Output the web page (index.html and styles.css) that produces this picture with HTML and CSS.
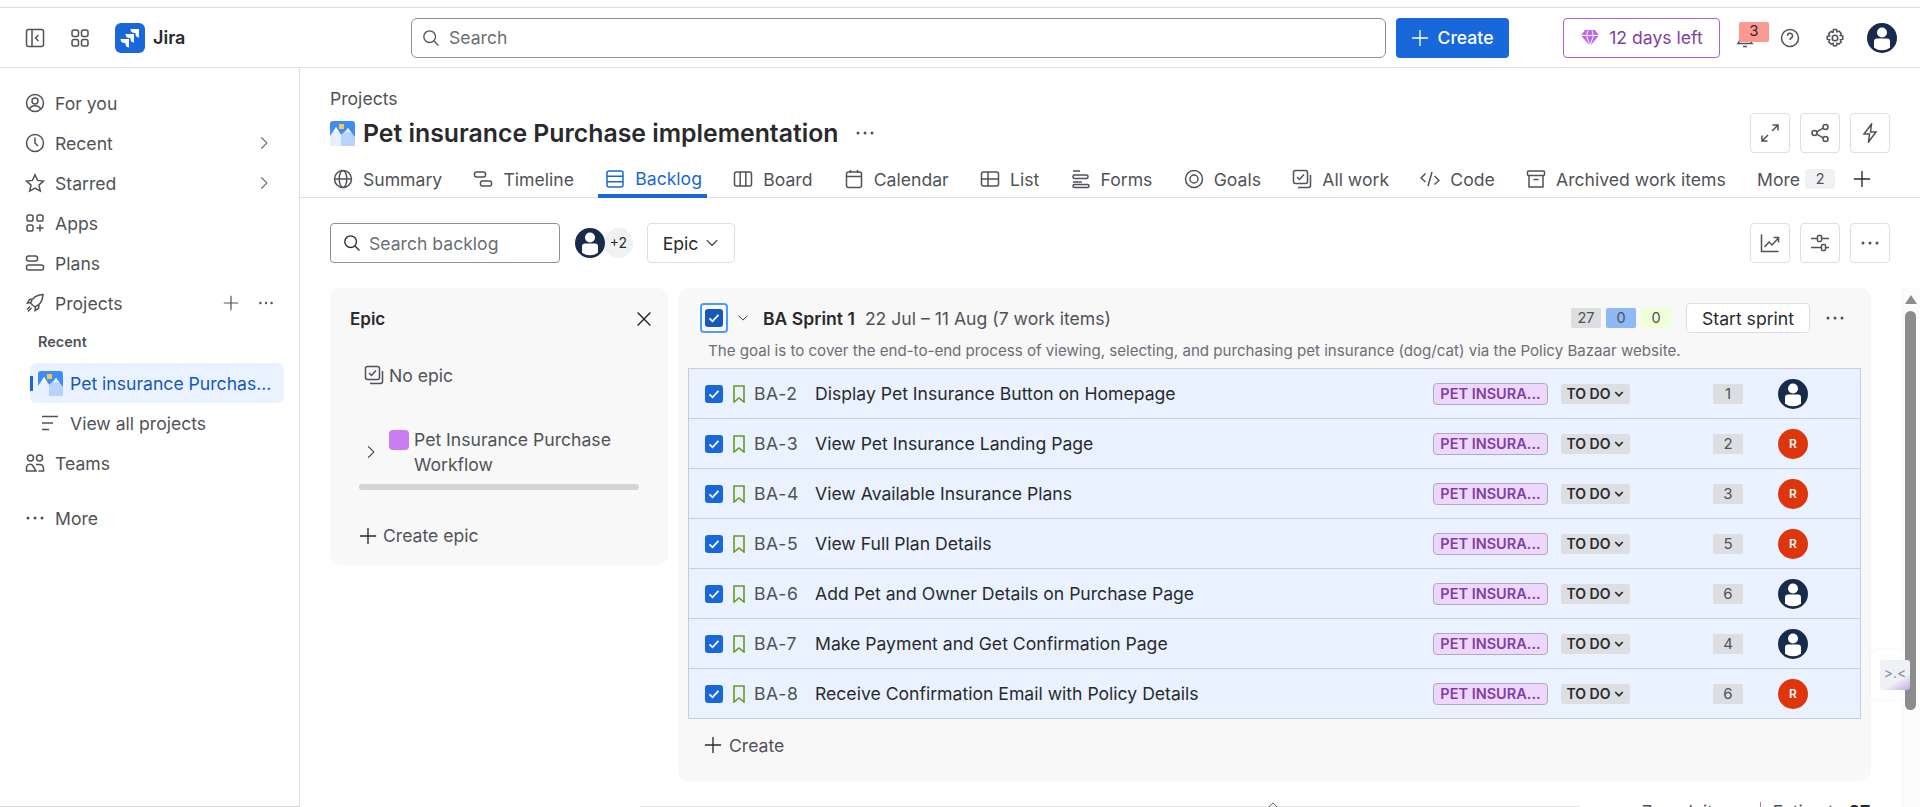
FILE: index.html
```html
<!DOCTYPE html>
<html lang="en">
<head>
    <meta charset="UTF-8">
    <title>Backlog - Jira</title>
    <link rel="stylesheet" href="styles.css">
</head>
<body>
    <svg class="defs" width="0" height="0">
        <symbol id="i-panel" viewBox="0 0 20 20"><rect x="1.500" y="1.500" width="17" height="17" rx="2"/><path d="M7 1.500v17M13.500 7l-3 3 3 3"/></symbol>
        <symbol id="i-grid" viewBox="0 0 20 20"><rect x="2" y="2" width="6.500" height="6.500" rx="2"/><rect x="11.500" y="2" width="6.500" height="6.500" rx="2"/><rect x="2" y="11.500" width="6.500" height="6.500" rx="2"/><rect x="11.500" y="11.500" width="6.500" height="6.500" rx="2"/></symbol>
        <symbol id="i-search" viewBox="0 0 20 20"><circle cx="8.500" cy="8.500" r="6.500"/><path d="M13.300 13.300l5 5"/></symbol>
        <symbol id="i-plus" viewBox="0 0 20 20"><path d="M10 1v18M1 10h18"/></symbol>
        <symbol id="i-gem" viewBox="0 0 20 20"><path class="gem-solid" d="M5 2h10l4 5.500L10 18 1 7.500z"/><path class="gem-cut" d="M1 7.500h18M6.500 7.500L10 18l3.500-10.500M6.500 7.500L8 2.500M13.500 7.500L12 2.500"/></symbol>
        <symbol id="i-bell" viewBox="0 0 20 20"><path d="M3 15.500c1.500-1.500 2-3 2-6.500a5 5 0 0 1 10 0c0 3.500.5 5 2 6.500zM8 18.500h4"/></symbol>
        <symbol id="i-help" viewBox="0 0 20 20"><circle cx="10" cy="10" r="8.500"/><path d="M7.500 7.800a2.500 2.500 0 1 1 3.700 2.200c-.8.500-1.200 1-1.200 2M10 14.200v.4"/></symbol>
        <symbol id="i-gear" viewBox="0 0 20 20"><circle cx="10" cy="10" r="2.800"/><path d="M8.500 1.500h3l.5 2.500 2-.9 2.300 2.200-1 2.100 2.500.6v3.200l-2.500.6 1 2.100-2.300 2.200-2-.9-.5 2.500h-3l-.5-2.500-2 .9-2.300-2.200 1-2.100-2.500-.6V8.400l2.500-.6-1-2.100L6 3.500l2 .9z"/></symbol>
        <symbol id="i-avatar" viewBox="0 0 30 30"><circle class="av-bg" cx="15" cy="15" r="15"/><circle class="av-fg" cx="15" cy="9.500" r="5"/><path class="av-fg" d="M10 15.500h10a3 3 0 0 1 3 3v6.200a14 14 0 0 1-16 0v-6.200a3 3 0 0 1 3-3z"/></symbol>
        <symbol id="i-foryou" viewBox="0 0 20 20"><circle cx="10" cy="10" r="8.500"/><circle cx="10" cy="8" r="3"/><path d="M4.500 16c1-2.500 3-3.200 5.500-3.200s4.500.7 5.500 3.200"/></symbol>
        <symbol id="i-clock" viewBox="0 0 20 20"><circle cx="10" cy="10" r="8.500"/><path d="M10 4.500V10l3 3"/></symbol>
        <symbol id="i-star" viewBox="0 0 20 20"><path d="M10 1.800l2.500 5.600 6 .6-4.500 4.100 1.300 6L10 15l-5.300 3.100 1.300-6L1.500 8l6-.6z"/></symbol>
        <symbol id="i-apps" viewBox="0 0 20 20"><rect x="2" y="2" width="6" height="6" rx="1.800"/><rect x="12" y="2" width="6" height="6" rx="1.800"/><rect x="2" y="12" width="6" height="6" rx="1.800"/><path d="M15 11.500v7M11.500 15h7"/></symbol>
        <symbol id="i-timeline" viewBox="0 0 20 20"><rect x="1.500" y="3" width="11" height="5" rx="2"/><rect x="7.500" y="12" width="11" height="5" rx="2"/></symbol>
        <symbol id="i-plans" viewBox="0 0 20 20"><rect x="1.500" y="3" width="11" height="5" rx="2"/><rect x="1.500" y="12" width="17" height="5" rx="2"/></symbol>
        <symbol id="i-rocket" viewBox="0 0 20 20"><path d="M8 12.500L5.500 10C7 5.500 11 2 18 1.500c-.2 6.500-3.500 10.500-8 12.500zM6 9.500l-3.500.5 2-3.500 3.500-.5M10.500 14l-.5 3.500 3.500-2 .5-3.500M5 13.500l-3 3M6.500 15l-3.500 3.500"/></symbol>
        <symbol id="i-dots" viewBox="0 0 20 20"><circle class="dot" cx="3" cy="10" r="1.500"/><circle class="dot" cx="10" cy="10" r="1.500"/><circle class="dot" cx="17" cy="10" r="1.500"/></symbol>
        <symbol id="i-right" viewBox="0 0 20 20"><path d="M6 2l8 8-8 8"/></symbol>
        <symbol id="i-down" viewBox="0 0 20 20"><path d="M2.500 6l7.500 7.500L17.500 6"/></symbol>
        <symbol id="i-close" viewBox="0 0 20 20"><path d="M2 2l16 16M18 2L2 18"/></symbol>
        <symbol id="i-lines" viewBox="0 0 20 20"><path d="M2 3.500h16M2 10h11M2 16.500h7"/></symbol>
        <symbol id="i-teams" viewBox="0 0 20 20"><circle cx="5.500" cy="5" r="3"/><circle cx="14.500" cy="5" r="3"/><path d="M1.500 18v-3.500a3.500 3.500 0 0 1 6.500-1.500l3 5H2zM11 11.500h4a3.500 3.500 0 0 1 3.500 3.500v3h-5"/></symbol>
        <symbol id="i-globe" viewBox="0 0 20 20"><circle cx="10" cy="10" r="8.500"/><ellipse cx="10" cy="10" rx="3.800" ry="8.500"/><path d="M1.500 10h17"/></symbol>
        <symbol id="i-backlog" viewBox="0 0 20 20"><rect x="2" y="2" width="16" height="16" rx="2"/><path d="M2 7.300h16M2 12.700h16"/></symbol>
        <symbol id="i-board" viewBox="0 0 20 20"><rect x="1.500" y="3" width="17" height="14" rx="2"/><path d="M7.200 3v14M12.800 3v14"/></symbol>
        <symbol id="i-calendar" viewBox="0 0 20 20"><rect x="2.500" y="3" width="15" height="15.500" rx="2"/><path d="M2.500 7.500h15M6.500 1v3M13.500 1v3"/></symbol>
        <symbol id="i-list" viewBox="0 0 20 20"><rect x="1.500" y="3" width="17" height="14" rx="2"/><path d="M1.500 10h17M8 3v14"/></symbol>
        <symbol id="i-forms" viewBox="0 0 20 20"><path d="M2 2h7"/><rect x="2" y="6" width="15" height="3.500" rx="1.500"/><path d="M2 13h9"/><rect x="2" y="15.500" width="16" height="3" rx="1.500"/></symbol>
        <symbol id="i-goal" viewBox="0 0 20 20"><circle cx="10" cy="10" r="8.500"/><circle cx="10" cy="10" r="4"/></symbol>
        <symbol id="i-stack" viewBox="0 0 20 20"><rect x="1.500" y="1.500" width="14" height="13" rx="2"/><path d="M5 8l2.500 2.500L12 5.500M18.500 6v10.500a2 2 0 0 1-2 2H6"/></symbol>
        <symbol id="i-code" viewBox="0 0 20 20"><path d="M5.500 4.500L1 9l4.500 4M14.500 7l4.500 4.500-4.500 4M12 3L8 17"/></symbol>
        <symbol id="i-archive" viewBox="0 0 20 20"><rect x="1.500" y="2" width="17" height="4.500" rx="1"/><path d="M3 6.500V18h14V6.500M7.500 10.500h5"/></symbol>
        <symbol id="i-expand" viewBox="0 0 20 20"><path d="M12 8l6-6M12.500 2H18v5.500M8 12l-6 6M2 12.500V18h5.500"/></symbol>
        <symbol id="i-share" viewBox="0 0 20 20"><circle cx="15.500" cy="4" r="2.500"/><circle cx="4.500" cy="10" r="2.500"/><circle cx="15.500" cy="16" r="2.500"/><path d="M6.700 8.800l6.600-3.600M6.700 11.200l6.600 3.600"/></symbol>
        <symbol id="i-bolt" viewBox="0 0 20 20"><path d="M11.500 1L4 11h5.500l-1 8L16 9h-5.500z"/></symbol>
        <symbol id="i-chart" viewBox="0 0 20 20"><path d="M1.500 1.500v17h17M4.500 14l4.500-5 3 3 6-6.500M13.500 4.500h5v5"/></symbol>
        <symbol id="i-sliders" viewBox="0 0 20 20"><path d="M1 5.500h6M12 5.500h7M1 14.500h10M16 14.500h3"/><rect x="7.500" y="2.500" width="4" height="6" rx="1"/><rect x="11.500" y="11.500" width="4" height="6" rx="1"/></symbol>
        <symbol id="i-bookmark" viewBox="0 0 12 18"><path d="M1 1h10v16l-5-4-5 4z"/></symbol>
        <symbol id="i-check" viewBox="0 0 18 18"><rect class="box" width="18" height="18" rx="3"/><path class="tick" d="M4.500 9.300l3 3 6-6.500"/></symbol>
        <symbol id="i-check-dark" viewBox="0 0 18 18"><rect class="box-dark" width="18" height="18" rx="3"/><path class="tick" d="M4.500 9.300l3 3 6-6.500"/></symbol>
        <symbol id="i-project" viewBox="0 0 25 25"><rect width="25" height="25" rx="3" fill="#3f8cf5"/><rect x="9" y="3" width="5" height="5" fill="#f7c948"/><path d="M0 25V15L6 6l4 6 3 4v9z" fill="#e6effd"/><path d="M11 25V14l7-7 7 9v9z" fill="#b6d3fb"/><path d="M6 6l3 5-2.500-1.500L4 12zM18 7l3.500 5-3-1.500-3 1.500z" fill="#fff"/></symbol>
    </svg>

    <div class="top-strip"></div>
    <header class="topbar">
        <div class="top-left">
            <svg class="icon i20"><use href="#i-panel"/></svg>
            <svg class="icon i20 apps-btn"><use href="#i-grid"/></svg>
            <svg class="jira-logo" viewBox="0 0 30 30">
                <rect width="30" height="30" rx="6" fill="#1868db"/>
                <path d="M24 6H15.500c0 2.500 1.700 4 4 4H20.500v1c0 2 1.500 3.500 3.500 3.500z" fill="#fff"/>
                <path d="M19 11H10.500c0 2.500 1.700 4 4 4H15.500v1c0 2 1.500 3.500 3.500 3.500z" fill="#fff"/>
                <path d="M14 16H5.500c0 2.500 1.700 4 4 4H10.500v1c0 2 1.500 3.500 3.500 3.500z" fill="#fff"/>
            </svg>
            <span class="jira-name">Jira</span>
        </div>
        <div class="search">
            <svg class="icon i18"><use href="#i-search"/></svg>
            <span>Search</span>
        </div>
        <button class="create-btn"><svg class="icon i18"><use href="#i-plus"/></svg>Create</button>
        <button class="trial-btn"><svg class="gem" width="20" height="20"><use href="#i-gem"/></svg>12 days left</button>
        <div class="bell">
            <svg class="icon i20"><use href="#i-bell"/></svg>
            <span class="bell-count">3</span>
        </div>
        <svg class="icon i20 help"><use href="#i-help"/></svg>
        <svg class="icon i20 gear"><use href="#i-gear"/></svg>
        <svg class="avatar top-avatar"><use href="#i-avatar"/></svg>
    </header>

    <div class="layout">
        <nav class="sidebar">
            <a class="nav-row"><svg class="icon i20"><use href="#i-foryou"/></svg>For you</a>
            <a class="nav-row"><svg class="icon i20"><use href="#i-clock"/></svg>Recent<svg class="icon i14 nav-end"><use href="#i-right"/></svg></a>
            <a class="nav-row"><svg class="icon i20"><use href="#i-star"/></svg>Starred<svg class="icon i14 nav-end"><use href="#i-right"/></svg></a>
            <a class="nav-row"><svg class="icon i20"><use href="#i-apps"/></svg>Apps</a>
            <a class="nav-row"><svg class="icon i20"><use href="#i-plans"/></svg>Plans</a>
            <a class="nav-row"><svg class="icon i20"><use href="#i-rocket"/></svg>Projects
                <svg class="icon i16 nav-plus"><use href="#i-plus"/></svg>
                <svg class="icon i16 nav-more"><use href="#i-dots"/></svg>
            </a>
            <div class="nav-label">Recent</div>
            <a class="nav-current">
                <span class="current-mark"></span>
                <svg class="project-icon"><use href="#i-project"/></svg>
                <span class="current-name">Pet insurance Purchas...</span>
            </a>
            <a class="nav-row nav-sub"><svg class="icon i20"><use href="#i-lines"/></svg>View all projects</a>
            <a class="nav-row"><svg class="icon i20"><use href="#i-teams"/></svg>Teams</a>
            <a class="nav-row nav-last"><svg class="icon i20"><use href="#i-dots"/></svg>More</a>
        </nav>

        <main class="content">
            <section class="page-head">
                <div>
                    <div class="crumb">Projects</div>
                    <div class="title-row">
                        <svg class="project-icon"><use href="#i-project"/></svg>
                        <h1>Pet insurance Purchase implementation</h1>
                        <svg class="icon i20 title-more"><use href="#i-dots"/></svg>
                    </div>
                </div>
                <div class="tool-group">
                    <button class="tool-btn"><svg class="icon i20"><use href="#i-expand"/></svg></button>
                    <button class="tool-btn"><svg class="icon i20"><use href="#i-share"/></svg></button>
                    <button class="tool-btn"><svg class="icon i20"><use href="#i-bolt"/></svg></button>
                </div>
            </section>

            <div class="tabs">
                <a class="tab"><svg class="icon i20"><use href="#i-globe"/></svg>Summary</a>
                <a class="tab"><svg class="icon i20"><use href="#i-timeline"/></svg>Timeline</a>
                <a class="tab active"><svg class="icon i20"><use href="#i-backlog"/></svg>Backlog</a>
                <a class="tab"><svg class="icon i20"><use href="#i-board"/></svg>Board</a>
                <a class="tab"><svg class="icon i20"><use href="#i-calendar"/></svg>Calendar</a>
                <a class="tab"><svg class="icon i20"><use href="#i-list"/></svg>List</a>
                <a class="tab"><svg class="icon i20"><use href="#i-forms"/></svg>Forms</a>
                <a class="tab"><svg class="icon i20"><use href="#i-goal"/></svg>Goals</a>
                <a class="tab"><svg class="icon i20"><use href="#i-stack"/></svg>All work</a>
                <a class="tab"><svg class="icon i20"><use href="#i-code"/></svg>Code</a>
                <a class="tab"><svg class="icon i20"><use href="#i-archive"/></svg>Archived work items</a>
                <a class="tab more-tab">More<span class="more-count">2</span></a>
                <svg class="icon i18 tab-plus"><use href="#i-plus"/></svg>
            </div>

            <div class="toolbar">
                <div class="backlog-search">
                    <svg class="icon i18"><use href="#i-search"/></svg>
                    <span>Search backlog</span>
                </div>
                <svg class="avatar"><use href="#i-avatar"/></svg>
                <span class="more-people">+2</span>
                <button class="epic-btn">Epic<svg class="icon i14"><use href="#i-down"/></svg></button>
                <div class="tool-group">
                    <button class="tool-btn"><svg class="icon i20"><use href="#i-chart"/></svg></button>
                    <button class="tool-btn"><svg class="icon i20"><use href="#i-sliders"/></svg></button>
                    <button class="tool-btn"><svg class="icon i20"><use href="#i-dots"/></svg></button>
                </div>
            </div>

            <div class="panels">
                <aside class="epic-panel">
                    <div class="epic-head">
                        <strong>Epic</strong>
                        <svg class="icon i16"><use href="#i-close"/></svg>
                    </div>
                    <div class="no-epic"><svg class="icon i20"><use href="#i-stack"/></svg>No epic</div>
                    <div class="epic-item">
                        <svg class="icon i14"><use href="#i-right"/></svg>
                        <span class="epic-color"></span>
                        <span class="epic-name">Pet Insurance Purchase Workflow</span>
                    </div>
                    <div class="epic-scroll"></div>
                    <div class="create-epic"><svg class="icon i18"><use href="#i-plus"/></svg>Create epic</div>
                </aside>

                <section class="sprint-panel">
                    <div class="sprint-head">
                        <span class="focus-ring"><svg class="check"><use href="#i-check-dark"/></svg></span>
                        <svg class="icon i12 sprint-toggle"><use href="#i-down"/></svg>
                        <strong class="sprint-name">BA Sprint 1</strong>
                        <span class="sprint-dates">22 Jul – 11 Aug (7 work items)</span>
                        <span class="count count-grey">27</span>
                        <span class="count count-blue">0</span>
                        <span class="count count-green">0</span>
                        <button class="start-btn">Start sprint</button>
                        <svg class="icon i20 sprint-more"><use href="#i-dots"/></svg>
                    </div>
                    <p class="sprint-goal">The goal is to cover the end-to-end process of viewing, selecting, and purchasing pet insurance (dog/cat) via the Policy Bazaar website.</p>

                    <div class="issues">
                        <div class="issue">
                            <svg class="check"><use href="#i-check"/></svg>
                            <svg class="bookmark"><use href="#i-bookmark"/></svg>
                            <span class="key">BA-2</span>
                            <span class="summary">Display Pet Insurance Button on Homepage</span>
                            <span class="epic-tag">PET INSURA...</span>
                            <span class="status">TO DO<svg class="icon i10"><use href="#i-down"/></svg></span>
                            <span class="points">1</span>
                            <svg class="avatar issue-avatar"><use href="#i-avatar"/></svg>
                        </div>
                        <div class="issue">
                            <svg class="check"><use href="#i-check"/></svg>
                            <svg class="bookmark"><use href="#i-bookmark"/></svg>
                            <span class="key">BA-3</span>
                            <span class="summary">View Pet Insurance Landing Page</span>
                            <span class="epic-tag">PET INSURA...</span>
                            <span class="status">TO DO<svg class="icon i10"><use href="#i-down"/></svg></span>
                            <span class="points">2</span>
                            <span class="avatar issue-avatar letter">R</span>
                        </div>
                        <div class="issue">
                            <svg class="check"><use href="#i-check"/></svg>
                            <svg class="bookmark"><use href="#i-bookmark"/></svg>
                            <span class="key">BA-4</span>
                            <span class="summary">View Available Insurance Plans</span>
                            <span class="epic-tag">PET INSURA...</span>
                            <span class="status">TO DO<svg class="icon i10"><use href="#i-down"/></svg></span>
                            <span class="points">3</span>
                            <span class="avatar issue-avatar letter">R</span>
                        </div>
                        <div class="issue">
                            <svg class="check"><use href="#i-check"/></svg>
                            <svg class="bookmark"><use href="#i-bookmark"/></svg>
                            <span class="key">BA-5</span>
                            <span class="summary">View Full Plan Details</span>
                            <span class="epic-tag">PET INSURA...</span>
                            <span class="status">TO DO<svg class="icon i10"><use href="#i-down"/></svg></span>
                            <span class="points">5</span>
                            <span class="avatar issue-avatar letter">R</span>
                        </div>
                        <div class="issue">
                            <svg class="check"><use href="#i-check"/></svg>
                            <svg class="bookmark"><use href="#i-bookmark"/></svg>
                            <span class="key">BA-6</span>
                            <span class="summary">Add Pet and Owner Details on Purchase Page</span>
                            <span class="epic-tag">PET INSURA...</span>
                            <span class="status">TO DO<svg class="icon i10"><use href="#i-down"/></svg></span>
                            <span class="points">6</span>
                            <svg class="avatar issue-avatar"><use href="#i-avatar"/></svg>
                        </div>
                        <div class="issue">
                            <svg class="check"><use href="#i-check"/></svg>
                            <svg class="bookmark"><use href="#i-bookmark"/></svg>
                            <span class="key">BA-7</span>
                            <span class="summary">Make Payment and Get Confirmation Page</span>
                            <span class="epic-tag">PET INSURA...</span>
                            <span class="status">TO DO<svg class="icon i10"><use href="#i-down"/></svg></span>
                            <span class="points">4</span>
                            <svg class="avatar issue-avatar"><use href="#i-avatar"/></svg>
                        </div>
                        <div class="issue">
                            <svg class="check"><use href="#i-check"/></svg>
                            <svg class="bookmark"><use href="#i-bookmark"/></svg>
                            <span class="key">BA-8</span>
                            <span class="summary">Receive Confirmation Email with Policy Details</span>
                            <span class="epic-tag">PET INSURA...</span>
                            <span class="status">TO DO<svg class="icon i10"><use href="#i-down"/></svg></span>
                            <span class="points">6</span>
                            <span class="avatar issue-avatar letter">R</span>
                        </div>
                    </div>

                    <div class="create-row"><svg class="icon i18"><use href="#i-plus"/></svg>Create</div>
                </section>
            </div>

            <div class="bottom-bar">
                <span class="bottom-line"></span>
                <svg class="icon i12 bottom-caret"><use href="#i-down"/></svg>
                <span>7 work items</span>
                <span class="bottom-sep">Estimate <b>27</b></span>
            </div>
        </main>
    </div>

    <div class="helper-card"></div>
    <div class="scroll-col">
        <span class="scroll-arrow"></span>
        <span class="scroll-thumb"></span>
    </div>
    <div class="helper-face">&gt;.&lt;</div>
</body>
</html>
```

FILE: styles.css
```css
* {
    box-sizing: border-box;
}
html, body {
    height: 807px;
    overflow: hidden;
}
body {
    margin: 0;
    background: #fff;
    color: #292a2e;
    font-family: "Inter", "Liberation Sans", sans-serif;
    font-size: 17.6px;
    position: relative;
}
.defs {
    position: absolute;
}
button {
    font-family: inherit;
    cursor: pointer;
}
.icon {
    fill: none;
    stroke: #505258;
    stroke-width: 1.5;
    flex: none;
    overflow: visible;
}
.dot {
    fill: #505258;
    stroke: none;
}
.i10 { width: 10px; height: 10px; }
.i12 { width: 12px; height: 12px; }
.i14 { width: 14px; height: 14px; }
.i16 { width: 16px; height: 16px; }
.i18 { width: 18px; height: 18px; }
.i20 { width: 20px; height: 20px; }
.avatar {
    width: 30px;
    height: 30px;
    flex: none;
}
.av-bg { fill: #172b4d; }
.av-fg { fill: #fff; }

/* top bar */
.top-strip {
    height: 8px;
    border-bottom: 1px solid #dcdcdc;
}
.topbar {
    height: 60px;
    border-bottom: 1px solid #dcdfe4;
    padding-left: 25px;
    display: flex;
    align-items: center;
}
.top-left {
    width: 386px;
    display: flex;
    align-items: center;
}
.apps-btn {
    margin-left: 25px;
}
.jira-logo {
    width: 30px;
    height: 30px;
    margin-left: 25px;
}
.jira-name {
    margin-left: 8px;
    font-size: 18px;
    font-weight: 600;
}
.search {
    width: 975px;
    height: 40px;
    border: 1px solid #8c8f97;
    border-radius: 6px;
    display: flex;
    align-items: center;
    gap: 9px;
    padding-left: 10px;
    color: #6b6e76;
}
.create-btn {
    width: 113px;
    height: 40px;
    margin-left: 10px;
    background: #1868db;
    color: #fff;
    border: none;
    border-radius: 4px;
    font-size: 17.6px;
    font-weight: 500;
    display: flex;
    align-items: center;
    justify-content: center;
    gap: 8px;
}
.create-btn .icon {
    stroke: #fff;
}
.trial-btn {
    width: 157px;
    height: 40px;
    margin-left: 54px;
    background: #fff;
    border: 1px solid #af59e1;
    border-radius: 4px;
    color: #803fa5;
    font-size: 17.6px;
    display: flex;
    align-items: center;
    justify-content: center;
    gap: 9px;
    padding: 0;
}
.gem-solid {
    fill: #bf63f3;
}
.gem-cut {
    fill: none;
    stroke: #fff;
    stroke-width: 1;
}
.bell {
    margin-left: 15px;
    position: relative;
    height: 20px;
}
.bell-count {
    position: absolute;
    left: 4px;
    top: -6px;
    width: 30px;
    height: 20px;
    background: #fd9891;
    border-radius: 2px;
    font-size: 15px;
    line-height: 18px;
    text-align: center;
}
.help {
    margin-left: 25px;
}
.gear {
    margin-left: 25px;
}
.top-avatar {
    margin-left: 22px;
}

/* sidebar */
.layout {
    display: flex;
    height: 739px;
}
.sidebar {
    width: 300px;
    flex: none;
    border-right: 1px solid #dcdfe4;
    border-bottom: 1px solid #d4d4d4;
    padding-top: 15px;
}
.nav-row {
    height: 40px;
    padding-left: 25px;
    display: flex;
    align-items: center;
    gap: 10px;
    color: #505258;
}
.nav-end {
    margin-left: auto;
    margin-right: 28px;
}
.nav-plus {
    margin-left: auto;
    margin-right: 9px;
}
.nav-more {
    margin-right: 25px;
}
.nav-label {
    height: 40px;
    padding-left: 38px;
    line-height: 38px;
    font-size: 14.5px;
    font-weight: 600;
    color: #505258;
}
.nav-current {
    width: 254px;
    height: 40px;
    margin-left: 30px;
    background: #e9f2fe;
    border-radius: 6px;
    display: flex;
    align-items: center;
    position: relative;
}
.current-mark {
    width: 3px;
    height: 15px;
    background: #1868db;
}
.project-icon {
    width: 25px;
    height: 25px;
    flex: none;
}
.nav-current .project-icon {
    margin-left: 5px;
}
.current-name {
    margin-left: 7px;
    color: #1558bc;
    white-space: nowrap;
}
.nav-sub {
    padding-left: 40px;
}
.nav-last {
    margin-top: 15px;
}

/* page heading */
.content {
    flex: 1;
    min-width: 0;
}
.page-head {
    height: 86px;
    padding: 20px 30px 0 30px;
    display: flex;
    justify-content: space-between;
}
.crumb {
    color: #505258;
    height: 22px;
    line-height: 22px;
}
.title-row {
    display: flex;
    align-items: center;
    margin-top: 8px;
}
.title-row h1 {
    margin: 0 0 0 8px;
    font-size: 24.8px;
    line-height: 30px;
    font-weight: 600;
    white-space: nowrap;
}
.title-more {
    margin-left: 17px;
}
.tool-group {
    display: flex;
    gap: 10px;
    margin-left: auto;
}
.page-head .tool-group {
    margin-top: 25px;
}
.tool-btn {
    width: 40px;
    height: 40px;
    background: #fff;
    border: 1px solid #dcdfe4;
    border-radius: 4px;
    padding: 0;
    display: flex;
    align-items: center;
    justify-content: center;
}

/* tabs */
.tabs {
    height: 44px;
    padding: 0 0 0 33px;
    border-bottom: 1px solid #dcdfe4;
    display: flex;
}
.tab {
    height: 44px;
    padding-top: 6px;
    margin-right: 31.3px;
    display: flex;
    align-items: center;
    gap: 10px;
    color: #505258;
    white-space: nowrap;
}
.tab.active {
    color: #1868db;
    border-bottom: 4px solid #1868db;
    padding: 9px 5px 0 7px;
    margin: 0 26.3px 0 -7px;
}
.tab.active .icon {
    stroke: #1868db;
}
.more-tab {
    gap: 5px;
    margin-right: 18px;
}
.more-count {
    width: 30px;
    height: 20px;
    background: #f0f1f2;
    border-radius: 3px;
    font-size: 14.5px;
    line-height: 20px;
    text-align: center;
}
.tab-plus {
    align-self: center;
    margin-top: 6px;
    stroke: #292a2e;
}

/* toolbar */
.toolbar {
    margin-top: 25px;
    padding: 0 30px;
    display: flex;
    align-items: center;
}
.backlog-search {
    width: 230px;
    height: 40px;
    border: 1px solid #8c8f97;
    border-radius: 4px;
    display: flex;
    align-items: center;
    gap: 8px;
    padding-left: 12px;
    color: #6b6e76;
}
.backlog-search .icon {
    stroke: #292a2e;
}
.toolbar .avatar {
    margin-left: 15px;
    position: relative;
}
.more-people {
    width: 29px;
    height: 30px;
    margin-left: -1px;
    background: #f0f1f2;
    border-radius: 50%;
    font-size: 14px;
    line-height: 30px;
    text-align: center;
}
.epic-btn {
    width: 88px;
    height: 40px;
    margin-left: 14px;
    background: #fff;
    border: 1px solid #dcdfe4;
    border-radius: 4px;
    font-size: 17.6px;
    color: #292a2e;
    display: flex;
    align-items: center;
    justify-content: center;
    gap: 7px;
    padding: 0;
}
.epic-btn .icon {
    stroke: #292a2e;
}

/* panels */
.panels {
    margin-top: 25px;
    padding-left: 30px;
    display: flex;
    align-items: flex-start;
    gap: 10px;
}
.epic-panel {
    width: 338px;
    height: 277px;
    background: #f8f8f8;
    border-radius: 10px;
    padding: 20px 20px 0 20px;
}
.epic-head {
    display: flex;
    align-items: center;
    justify-content: space-between;
    height: 22px;
}
.epic-head strong {
    font-size: 17px;
    font-weight: 600;
}
.epic-head .icon {
    stroke: #292a2e;
    stroke-width: 1.8;
    margin-right: -4px;
}
.no-epic {
    margin: 33px 0 0 14px;
    height: 24px;
    display: flex;
    align-items: center;
    gap: 5px;
    color: #505258;
}
.epic-item {
    margin: 40px 0 0 14px;
    display: flex;
    align-items: center;
    line-height: 25px;
    color: #505258;
}
.epic-item .icon {
    stroke: #292a2e;
}
.epic-color {
    width: 20px;
    height: 20px;
    margin: 0 5px 25px 11px;
    background: #c97cf4;
    border-radius: 4px;
    flex: none;
}
.epic-name {
    width: 225px;
}
.epic-scroll {
    height: 6px;
    margin: 7px 9px 0 9px;
    background: #d5d5d5;
    border-radius: 3px;
}
.create-epic {
    margin: 35px 0 0 9px;
    display: flex;
    align-items: center;
    gap: 6px;
    color: #505258;
}
.create-epic .icon,
.create-row .icon {
    stroke: #292a2e;
}
.sprint-panel {
    width: 1193px;
    background: #f8f8f8;
    border-radius: 10px;
    padding-top: 15px;
}
.sprint-head {
    height: 30px;
    padding-left: 22px;
    display: flex;
    align-items: center;
}
.focus-ring {
    width: 28px;
    height: 30px;
    border: 2px solid #4c9aff;
    border-radius: 4px;
    display: flex;
    align-items: center;
    justify-content: center;
}
.check {
    width: 18px;
    height: 18px;
    flex: none;
}
.box {
    fill: #1868db;
}
.box-dark {
    fill: #1558bc;
}
.tick {
    fill: none;
    stroke: #fff;
    stroke-width: 1.8;
}
.sprint-toggle {
    margin-left: 9px;
    stroke: #292a2e;
}
.sprint-name {
    margin-left: 14px;
    font-weight: 600;
    white-space: nowrap;
}
.sprint-dates {
    margin-left: 10px;
    color: #505258;
    white-space: nowrap;
}
.count {
    width: 30px;
    height: 20px;
    border-radius: 2px;
    font-size: 14.5px;
    line-height: 20px;
    text-align: center;
    color: #505258;
}
.count-grey {
    margin-left: auto;
    background: #dddee1;
}
.count-blue {
    margin-left: 5px;
    background: #8fb8f6;
}
.count-green {
    margin-left: 5px;
    background: #efffd6;
}
.start-btn {
    width: 124px;
    height: 30px;
    margin-left: 15px;
    background: #fff;
    border: 1px solid #dcdfe4;
    border-radius: 4px;
    font-size: 17.6px;
    color: #292a2e;
    padding: 0;
}
.sprint-more {
    margin: 0 26px 0 15px;
}
.sprint-goal {
    height: 35px;
    margin: 0;
    padding-left: 30px;
    font-size: 15.1px;
    line-height: 36px;
    color: #6b6e76;
    white-space: nowrap;
}
.issues {
    width: 1173px;
    margin-left: 10px;
    border: 1px solid #c5cede;
    border-bottom: none;
}
.issue {
    height: 50px;
    padding-left: 16px;
    background: #e9f2fe;
    border-bottom: 1px solid #c5cede;
    display: flex;
    align-items: center;
}
.bookmark {
    width: 12px;
    height: 18px;
    margin-left: 10px;
    fill: none;
    stroke: #6a9a23;
    stroke-width: 1.6;
    flex: none;
}
.key {
    width: 61px;
    margin-left: 9px;
    color: #505258;
    letter-spacing: 0.6px;
}
.summary {
    flex: 1;
    white-space: nowrap;
}
.epic-tag {
    width: 115px;
    height: 22px;
    background: #eed7fc;
    border: 1px solid #b3a9bb;
    border-radius: 4px;
    color: #803fa5;
    font-size: 14.5px;
    font-weight: 600;
    line-height: 20px;
    text-align: center;
    white-space: nowrap;
}
.status {
    width: 69px;
    height: 20px;
    margin-left: 13px;
    background: #dddee1;
    border-radius: 3px;
    font-size: 14px;
    font-weight: 600;
    display: flex;
    align-items: center;
    justify-content: center;
    gap: 4px;
}
.status .icon {
    stroke: #292a2e;
    stroke-width: 3.500;
}
.points {
    width: 30px;
    height: 20px;
    margin-left: 83px;
    background: #dddee1;
    border-radius: 2px;
    font-size: 15px;
    line-height: 20px;
    text-align: center;
    color: #505258;
}
.issue-avatar {
    margin: 0 52px 0 35px;
}
.letter {
    background: #de350b;
    border-radius: 50%;
    color: #fff;
    font-size: 12px;
    font-weight: 600;
    line-height: 30px;
    text-align: center;
}
.create-row {
    height: 62px;
    padding: 0 0 10px 26px;
    display: flex;
    align-items: center;
    gap: 7px;
    color: #505258;
}

/* cut off by the window */
.bottom-bar {
    margin-top: 21px;
    padding-left: 1342px;
    display: flex;
    gap: 12px;
    position: relative;
    color: #505258;
    line-height: 20px;
}
.bottom-line {
    position: absolute;
    left: 340px;
    top: 4px;
    width: 940px;
    height: 1px;
    background: #e4e4e4;
}
.bottom-caret {
    position: absolute;
    left: 967px;
    top: -3px;
    transform: rotate(180deg);
}
.bottom-sep {
    border-left: 1px solid #8c8f97;
    padding-left: 12px;
}
.bottom-sep b {
    color: #292a2e;
}

/* overlays */
.helper-card {
    position: absolute;
    right: 0;
    top: 650px;
    width: 49px;
    height: 50px;
    background: #fff;
    border-radius: 6px 0 0 6px;
    box-shadow: 0 0 3px rgba(0, 0, 0, 0.08);
}
.scroll-col {
    position: absolute;
    z-index: 1;
    right: 0;
    top: 288px;
    width: 19px;
    height: 519px;
    background: #fbfbfb;
}
.scroll-arrow {
    position: absolute;
    left: 4px;
    top: 7px;
    border-left: 6px solid transparent;
    border-right: 6px solid transparent;
    border-bottom: 9px solid #8c8c8c;
}
.scroll-thumb {
    position: absolute;
    left: 4px;
    top: 23px;
    width: 11px;
    height: 399px;
    background: #8c8c8c;
    border-radius: 6px;
}
.helper-face {
    position: absolute;
    z-index: 2;
    left: 1880px;
    top: 660px;
    width: 30px;
    height: 30px;
    background: linear-gradient(150deg, #eef1f5 65%, #c9a6e6);
    border-radius: 3px;
    font-size: 14px;
    line-height: 26px;
    text-align: center;
    color: #8c8f97;
}
```
